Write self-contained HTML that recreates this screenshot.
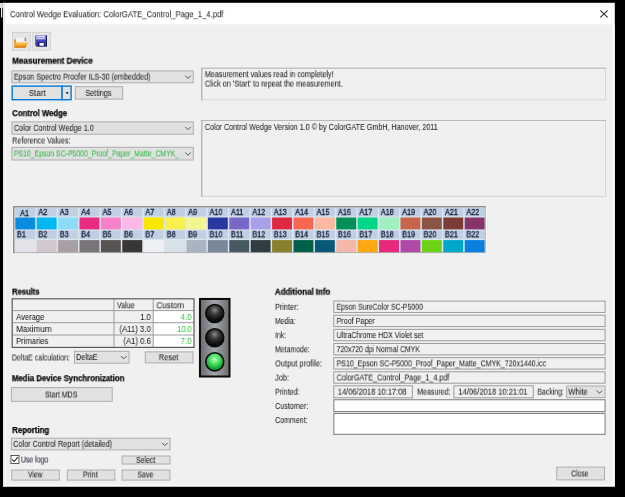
<!DOCTYPE html>
<html><head><meta charset="utf-8"><title>Control Wedge Evaluation</title>
<style>
html,body{margin:0;padding:0;}
body{width:625px;height:497px;background:#000;position:relative;overflow:hidden;font-family:"Liberation Sans",sans-serif;}
#w{filter:blur(0.45px);position:absolute;left:0;top:0;width:625px;height:497px}
#g{position:absolute;left:0;top:0;width:625px;height:497px;display:block}
.t{position:absolute;display:inline-block;white-space:pre;transform-origin:0 50%;will-change:transform;font-family:"Liberation Sans",sans-serif;}
</style></head><body><div id="w">
<svg id="g" width="625" height="497" viewBox="0 0 625 497">
<rect x="3.00" y="2.80" width="611.80" height="483.70" fill="#ffffff"/>
<rect x="3.00" y="24.50" width="611.80" height="462.00" fill="#f8f8f8"/>
<rect x="6.00" y="24.50" width="606.20" height="460.10" fill="#f0f0f0"/>
<rect x="3.00" y="2.80" width="1.90" height="483.70" fill="#ececec"/>
<rect x="0.00" y="3.00" width="2.90" height="5.00" fill="#e0e0e0"/>
<rect x="1.00" y="8.00" width="1.20" height="9.50" fill="#f4f4f4"/>
<svg x="599" y="9" width="10" height="10" viewBox="0 0 10 10"><path d="M1.3 1.4 L8.6 8.4 M8.6 1.4 L1.3 8.4" stroke="#2a2a2a" stroke-width="1.05" fill="none"/></svg>
<rect x="12.50" y="32.50" width="17.90" height="17.70" fill="#e5e5e5" stroke="#d2d2d2" stroke-width="1"/>
<rect x="32.80" y="32.50" width="17.60" height="17.70" fill="#e5e5e5" stroke="#d2d2d2" stroke-width="1"/>
<svg x="13.6" y="36.8" width="15.6" height="11.4" viewBox="0 0 15.6 11.4">
<defs><linearGradient id="fo" x1="0" x2="0" y1="0" y2="1"><stop offset="0" stop-color="#fcdc98"/><stop offset="0.45" stop-color="#f6b040"/><stop offset="1" stop-color="#d87c00"/></linearGradient></defs>
<path d="M0.6 2.4 L0.6 10.6 L11.6 10.6 L11.6 2.4 Z" fill="#e89a28"/>
<path d="M2.6 1.0 L11.4 1.0 L11.4 5.8 L2.6 5.8 Z" fill="#f2f6fa"/>
<path d="M11.0 1.0 L12.6 1.0 L12.6 4.4 L11.0 4.4 Z" fill="#8a9098"/>
<path d="M0.8 10.9 L2.3 5.6 Q2.4 5.2 2.9 5.2 L14.4 4.9 Q15 4.9 14.7 5.5 L12.5 10.2 Q12.2 10.9 11.5 10.9 Z" fill="url(#fo)"/>
</svg>
<svg x="34.9" y="34.9" width="12.4" height="11.9" viewBox="0 0 12.4 11.9">
<path d="M0.3 0.5 L12.1 0.5 L12.1 11.5 L1.6 11.5 L0.3 10.3 Z" fill="#4444c0"/>
<path d="M1.0 0.6 L10.9 0.6 L10.9 4.7 L1.0 4.7 Z" fill="#a4a4ea"/>
<path d="M2.4 1.4 L9.8 1.4 L9.8 2.1 L2.4 2.1 Z M2.4 3.0 L9.8 3.0 L9.8 3.7 L2.4 3.7 Z" fill="#e8e8fc"/>
<path d="M2.6 7.4 L9.9 7.4 L9.9 11.5 L2.6 11.5 Z" fill="#20206c"/>
<path d="M4.6 8.2 L8.9 8.2 L8.9 11.0 L4.6 11.0 Z" fill="#f4f4fa"/>
<path d="M10.9 0.5 L12.1 0.5 L12.1 11.5 L10.9 11.5 Z" fill="#1a1a5c"/>
<path d="M0.3 10.8 L12.1 10.8 L12.1 11.5 L1.6 11.5 Z" fill="#1a1a5c"/>
</svg>
<rect x="11.90" y="70.90" width="181.40" height="11.90" fill="#e1e1e1" stroke="#adadad" stroke-width="1"/>
<svg x="184.25" y="74.65" width="7.50" height="4.80" viewBox="-3.75 -2.4 7.5 4.8"><path d="M-2.75 -1.4 L0 1.4 L2.75 -1.4" fill="none" stroke="#444" stroke-width="0.9"/></svg>
<rect x="12.20" y="86.10" width="58.90" height="13.60" fill="#e1e1e1" stroke="#0078d7" stroke-width="1.4"/>
<rect x="61.20" y="85.40" width="1.60" height="15.00" fill="#0078d7"/>
<svg x="65.3" y="92.0" width="3.8" height="2.6" viewBox="0 0 5 3.4"><path d="M0.4 0.3 L4.6 0.3 L2.5 3 Z" fill="#111"/></svg>
<rect x="75.30" y="86.70" width="47.40" height="12.40" fill="#e1e1e1" stroke="#adadad" stroke-width="1"/>
<rect x="201.80" y="68.20" width="403.70" height="31.60" fill="#f0f0f0" stroke="#d2d6dc" stroke-width="1"/>
<rect x="201.30" y="67.70" width="404.70" height="1.00" fill="#b4b8c0"/>
<rect x="201.30" y="67.70" width="1.00" height="32.60" fill="#a4a8b0"/>
<rect x="11.90" y="121.90" width="181.40" height="12.30" fill="#e1e1e1" stroke="#adadad" stroke-width="1"/>
<svg x="184.25" y="125.85" width="7.50" height="4.80" viewBox="-3.75 -2.4 7.5 4.8"><path d="M-2.75 -1.4 L0 1.4 L2.75 -1.4" fill="none" stroke="#444" stroke-width="0.9"/></svg>
<rect x="11.90" y="147.30" width="181.40" height="12.70" fill="#e1e1e1" stroke="#adadad" stroke-width="1"/>
<svg x="184.25" y="151.45" width="7.50" height="4.80" viewBox="-3.75 -2.4 7.5 4.8"><path d="M-2.75 -1.4 L0 1.4 L2.75 -1.4" fill="none" stroke="#444" stroke-width="0.9"/></svg>
<rect x="201.80" y="120.50" width="403.70" height="75.90" fill="#f0f0f0" stroke="#d2d6dc" stroke-width="1"/>
<rect x="201.30" y="120.00" width="404.70" height="1.00" fill="#b4b8c0"/>
<rect x="201.30" y="120.00" width="1.00" height="76.90" fill="#a4a8b0"/>
<rect x="12.60" y="205.80" width="474.20" height="48.40" fill="#fafafa"/>
<rect x="13.50" y="206.60" width="471.70" height="46.10" fill="#dde4ee" stroke="#a6a6a6" stroke-width="1.0"/>
<rect x="13.00" y="206.10" width="472.70" height="1.30" fill="#8e8e8e"/>
<rect x="13.00" y="206.10" width="1.40" height="47.10" fill="#8e8e8e"/>
<rect x="15.30" y="207.80" width="19.90" height="8.60" fill="#bfd0e3"/>
<rect x="15.30" y="217.50" width="19.90" height="11.90" fill="#0a8ce0"/>
<rect x="15.30" y="230.40" width="19.90" height="8.40" fill="#bfd0e3"/>
<rect x="15.30" y="240.10" width="19.90" height="12.10" fill="#e5e1e9"/>
<rect x="36.70" y="207.80" width="19.90" height="8.60" fill="#bfd0e3"/>
<rect x="36.70" y="217.50" width="19.90" height="11.90" fill="#00b8f0"/>
<rect x="36.70" y="230.40" width="19.90" height="8.40" fill="#bfd0e3"/>
<rect x="36.70" y="240.10" width="19.90" height="12.10" fill="#d0c8cc"/>
<rect x="58.10" y="207.80" width="19.90" height="8.60" fill="#bfd0e3"/>
<rect x="58.10" y="217.50" width="19.90" height="11.90" fill="#8cdcf8"/>
<rect x="58.10" y="230.40" width="19.90" height="8.40" fill="#bfd0e3"/>
<rect x="58.10" y="240.10" width="19.90" height="12.10" fill="#a8a0a4"/>
<rect x="79.50" y="207.80" width="19.90" height="8.60" fill="#bfd0e3"/>
<rect x="79.50" y="217.50" width="19.90" height="11.90" fill="#ea2a80"/>
<rect x="79.50" y="230.40" width="19.90" height="8.40" fill="#bfd0e3"/>
<rect x="79.50" y="240.10" width="19.90" height="12.10" fill="#787478"/>
<rect x="100.90" y="207.80" width="19.90" height="8.60" fill="#bfd0e3"/>
<rect x="100.90" y="217.50" width="19.90" height="11.90" fill="#f880c8"/>
<rect x="100.90" y="230.40" width="19.90" height="8.40" fill="#bfd0e3"/>
<rect x="100.90" y="240.10" width="19.90" height="12.10" fill="#585454"/>
<rect x="122.30" y="207.80" width="19.90" height="8.60" fill="#bfd0e3"/>
<rect x="122.30" y="217.50" width="19.90" height="11.90" fill="#fcb8e8"/>
<rect x="122.30" y="230.40" width="19.90" height="8.40" fill="#bfd0e3"/>
<rect x="122.30" y="240.10" width="19.90" height="12.10" fill="#383634"/>
<rect x="143.70" y="207.80" width="19.90" height="8.60" fill="#bfd0e3"/>
<rect x="143.70" y="217.50" width="19.90" height="11.90" fill="#f8e800"/>
<rect x="143.70" y="230.40" width="19.90" height="8.40" fill="#bfd0e3"/>
<rect x="143.70" y="240.10" width="19.90" height="12.10" fill="#eef0f4"/>
<rect x="165.10" y="207.80" width="19.90" height="8.60" fill="#bfd0e3"/>
<rect x="165.10" y="217.50" width="19.90" height="11.90" fill="#f8f050"/>
<rect x="165.10" y="230.40" width="19.90" height="8.40" fill="#bfd0e3"/>
<rect x="165.10" y="240.10" width="19.90" height="12.10" fill="#d8e0e8"/>
<rect x="186.50" y="207.80" width="19.90" height="8.60" fill="#bfd0e3"/>
<rect x="186.50" y="217.50" width="19.90" height="11.90" fill="#f4f490"/>
<rect x="186.50" y="230.40" width="19.90" height="8.40" fill="#bfd0e3"/>
<rect x="186.50" y="240.10" width="19.90" height="12.10" fill="#a8b4c0"/>
<rect x="207.90" y="207.80" width="19.90" height="8.60" fill="#bfd0e3"/>
<rect x="207.90" y="217.50" width="19.90" height="11.90" fill="#2838a0"/>
<rect x="207.90" y="230.40" width="19.90" height="8.40" fill="#bfd0e3"/>
<rect x="207.90" y="240.10" width="19.90" height="12.10" fill="#788898"/>
<rect x="229.30" y="207.80" width="19.90" height="8.60" fill="#bfd0e3"/>
<rect x="229.30" y="217.50" width="19.90" height="11.90" fill="#7868c8"/>
<rect x="229.30" y="230.40" width="19.90" height="8.40" fill="#bfd0e3"/>
<rect x="229.30" y="240.10" width="19.90" height="12.10" fill="#485860"/>
<rect x="250.70" y="207.80" width="19.90" height="8.60" fill="#bfd0e3"/>
<rect x="250.70" y="217.50" width="19.90" height="11.90" fill="#a8a0e8"/>
<rect x="250.70" y="230.40" width="19.90" height="8.40" fill="#bfd0e3"/>
<rect x="250.70" y="240.10" width="19.90" height="12.10" fill="#303c40"/>
<rect x="272.10" y="207.80" width="19.90" height="8.60" fill="#bfd0e3"/>
<rect x="272.10" y="217.50" width="19.90" height="11.90" fill="#e02840"/>
<rect x="272.10" y="230.40" width="19.90" height="8.40" fill="#bfd0e3"/>
<rect x="272.10" y="240.10" width="19.90" height="12.10" fill="#88802c"/>
<rect x="293.50" y="207.80" width="19.90" height="8.60" fill="#bfd0e3"/>
<rect x="293.50" y="217.50" width="19.90" height="11.90" fill="#f86850"/>
<rect x="293.50" y="230.40" width="19.90" height="8.40" fill="#bfd0e3"/>
<rect x="293.50" y="240.10" width="19.90" height="12.10" fill="#006048"/>
<rect x="314.90" y="207.80" width="19.90" height="8.60" fill="#bfd0e3"/>
<rect x="314.90" y="217.50" width="19.90" height="11.90" fill="#fcb8a0"/>
<rect x="314.90" y="230.40" width="19.90" height="8.40" fill="#bfd0e3"/>
<rect x="314.90" y="240.10" width="19.90" height="12.10" fill="#085878"/>
<rect x="336.30" y="207.80" width="19.90" height="8.60" fill="#bfd0e3"/>
<rect x="336.30" y="217.50" width="19.90" height="11.90" fill="#009058"/>
<rect x="336.30" y="230.40" width="19.90" height="8.40" fill="#bfd0e3"/>
<rect x="336.30" y="240.10" width="19.90" height="12.10" fill="#f4b8a8"/>
<rect x="357.70" y="207.80" width="19.90" height="8.60" fill="#bfd0e3"/>
<rect x="357.70" y="217.50" width="19.90" height="11.90" fill="#00d888"/>
<rect x="357.70" y="230.40" width="19.90" height="8.40" fill="#bfd0e3"/>
<rect x="357.70" y="240.10" width="19.90" height="12.10" fill="#ffa810"/>
<rect x="379.10" y="207.80" width="19.90" height="8.60" fill="#bfd0e3"/>
<rect x="379.10" y="217.50" width="19.90" height="11.90" fill="#a0f0c0"/>
<rect x="379.10" y="230.40" width="19.90" height="8.40" fill="#bfd0e3"/>
<rect x="379.10" y="240.10" width="19.90" height="12.10" fill="#e82878"/>
<rect x="400.50" y="207.80" width="19.90" height="8.60" fill="#bfd0e3"/>
<rect x="400.50" y="217.50" width="19.90" height="11.90" fill="#c8644c"/>
<rect x="400.50" y="230.40" width="19.90" height="8.40" fill="#bfd0e3"/>
<rect x="400.50" y="240.10" width="19.90" height="12.10" fill="#b048a8"/>
<rect x="421.90" y="207.80" width="19.90" height="8.60" fill="#bfd0e3"/>
<rect x="421.90" y="217.50" width="19.90" height="11.90" fill="#8a5444"/>
<rect x="421.90" y="230.40" width="19.90" height="8.40" fill="#bfd0e3"/>
<rect x="421.90" y="240.10" width="19.90" height="12.10" fill="#6cd414"/>
<rect x="443.30" y="207.80" width="19.90" height="8.60" fill="#bfd0e3"/>
<rect x="443.30" y="217.50" width="19.90" height="11.90" fill="#7a3c34"/>
<rect x="443.30" y="230.40" width="19.90" height="8.40" fill="#bfd0e3"/>
<rect x="443.30" y="240.10" width="19.90" height="12.10" fill="#00a8c8"/>
<rect x="464.70" y="207.80" width="19.90" height="8.60" fill="#bfd0e3"/>
<rect x="464.70" y="217.50" width="19.90" height="11.90" fill="#86346a"/>
<rect x="464.70" y="230.40" width="19.90" height="8.40" fill="#bfd0e3"/>
<rect x="464.70" y="240.10" width="19.90" height="12.10" fill="#0880e0"/>
<rect x="12.20" y="298.80" width="181.80" height="48.60" fill="#f0f0f0"/>
<rect x="153.20" y="310.60" width="40.80" height="36.80" fill="#ffffff"/>
<rect x="12.20" y="310.10" width="181.80" height="1.00" fill="#9c9c9c"/>
<rect x="12.20" y="322.20" width="181.80" height="1.00" fill="#9c9c9c"/>
<rect x="12.20" y="334.50" width="181.80" height="1.00" fill="#9c9c9c"/>
<rect x="113.50" y="298.80" width="1.00" height="48.60" fill="#9c9c9c"/>
<rect x="152.70" y="298.80" width="1.00" height="48.60" fill="#9c9c9c"/>
<rect x="12.20" y="298.80" width="181.80" height="48.60" fill="none" stroke="#5a5a5a" stroke-width="1.2"/>
<rect x="74.50" y="351.30" width="54.50" height="11.90" fill="#e1e1e1" stroke="#adadad" stroke-width="1"/>
<svg x="119.95" y="355.05" width="7.50" height="4.80" viewBox="-3.75 -2.4 7.5 4.8"><path d="M-2.75 -1.4 L0 1.4 L2.75 -1.4" fill="none" stroke="#444" stroke-width="0.9"/></svg>
<rect x="145.30" y="351.90" width="47.70" height="11.00" fill="#e1e1e1" stroke="#adadad" stroke-width="1"/>
<svg x="198.8" y="297.8" width="31.9" height="79.9" viewBox="0 0 32.4 80.4" preserveAspectRatio="none">
<defs>
<linearGradient id="hg" x1="0" x2="1" y1="0" y2="0"><stop offset="0" stop-color="#6c7074"/><stop offset="0.5" stop-color="#a4a8ac"/><stop offset="1" stop-color="#6c7074"/></linearGradient>
<radialGradient id="dk" cx="0.5" cy="0.3" r="0.6"><stop offset="0" stop-color="#8a8a8a"/><stop offset="0.45" stop-color="#3a3a3a"/><stop offset="1" stop-color="#0c0c0c"/></radialGradient>
<radialGradient id="gr" cx="0.5" cy="0.35" r="0.6"><stop offset="0" stop-color="#b8ffc0"/><stop offset="0.5" stop-color="#48e060"/><stop offset="1" stop-color="#109828"/></radialGradient>
</defs>
<rect x="0" y="0" width="32.4" height="80.4" fill="#0a0a0a"/>
<rect x="2.2" y="2.2" width="28" height="76" fill="url(#hg)"/>
<circle cx="16.2" cy="15.8" r="9.9" fill="#0a0a0a"/><circle cx="16.2" cy="15.8" r="8.3" fill="url(#dk)"/>
<circle cx="16.2" cy="40.2" r="9.9" fill="#0a0a0a"/><circle cx="16.2" cy="40.2" r="8.3" fill="url(#dk)"/>
<circle cx="16.2" cy="64.4" r="9.9" fill="#0a0a0a"/><circle cx="16.2" cy="64.4" r="8.3" fill="url(#gr)"/>
</svg>
<rect x="11.40" y="387.60" width="100.80" height="13.70" fill="#e1e1e1" stroke="#adadad" stroke-width="1"/>
<rect x="11.40" y="438.20" width="158.70" height="11.70" fill="#e1e1e1" stroke="#adadad" stroke-width="1"/>
<svg x="161.05" y="441.85" width="7.50" height="4.80" viewBox="-3.75 -2.4 7.5 4.8"><path d="M-2.75 -1.4 L0 1.4 L2.75 -1.4" fill="none" stroke="#444" stroke-width="0.9"/></svg>
<rect x="10.95" y="455.45" width="8.00" height="8.00" fill="#ffffff" stroke="#4a4a4a" stroke-width="0.9"/>
<svg x="10.5" y="455.0" width="8.9" height="8.9" viewBox="0 0 8 8"><path d="M1.5 4.0 L3.2 5.9 L6.6 1.9" fill="none" stroke="#222" stroke-width="0.9"/></svg>
<rect x="122.10" y="456.00" width="47.90" height="8.00" fill="#e1e1e1" stroke="#adadad" stroke-width="1"/>
<rect x="11.80" y="470.00" width="47.50" height="10.10" fill="#e1e1e1" stroke="#adadad" stroke-width="1"/>
<rect x="67.30" y="470.00" width="47.50" height="10.10" fill="#e1e1e1" stroke="#adadad" stroke-width="1"/>
<rect x="122.10" y="470.00" width="47.90" height="10.10" fill="#e1e1e1" stroke="#adadad" stroke-width="1"/>
<rect x="556.80" y="467.10" width="47.70" height="12.80" fill="#e1e1e1" stroke="#adadad" stroke-width="1"/>
<rect x="333.80" y="301.05" width="271.30" height="11.40" fill="#f0f0f0" stroke="#9c9c9c" stroke-width="1"/>
<rect x="333.80" y="315.20" width="271.30" height="11.40" fill="#f0f0f0" stroke="#9c9c9c" stroke-width="1"/>
<rect x="333.80" y="329.35" width="271.30" height="11.40" fill="#f0f0f0" stroke="#9c9c9c" stroke-width="1"/>
<rect x="333.80" y="343.50" width="271.30" height="11.40" fill="#f0f0f0" stroke="#9c9c9c" stroke-width="1"/>
<rect x="333.80" y="357.65" width="271.30" height="11.40" fill="#f0f0f0" stroke="#9c9c9c" stroke-width="1"/>
<rect x="333.80" y="371.80" width="271.30" height="11.40" fill="#f0f0f0" stroke="#9c9c9c" stroke-width="1"/>
<rect x="333.80" y="385.80" width="78.60" height="12.00" fill="#f0f0f0" stroke="#9c9c9c" stroke-width="1"/>
<rect x="453.90" y="385.80" width="79.40" height="12.00" fill="#f0f0f0" stroke="#9c9c9c" stroke-width="1"/>
<rect x="566.70" y="386.00" width="38.40" height="11.60" fill="#e1e1e1" stroke="#adadad" stroke-width="1"/>
<svg x="595.65" y="389.55" width="7.50" height="4.80" viewBox="-3.75 -2.4 7.5 4.8"><path d="M-2.75 -1.4 L0 1.4 L2.75 -1.4" fill="none" stroke="#444" stroke-width="0.9"/></svg>
<rect x="333.85" y="399.75" width="271.20" height="11.80" fill="#ffffff" stroke="#868686" stroke-width="1.1"/>
<rect x="333.85" y="413.45" width="271.20" height="20.90" fill="#ffffff" stroke="#868686" stroke-width="1.1"/>
</svg>
<span class="t" style="left:9px;top:7px;font-size:9.4px;line-height:14px;color:#222;-webkit-text-stroke:0.04px #222;transform:translate(0.90px,0.19px) scaleX(0.8206);">Control Wedge Evaluation: ColorGATE_Control_Page_1_4.pdf</span>
<span class="t" style="left:12px;top:55px;font-size:8.2px;line-height:12px;color:#000000;font-weight:bold;-webkit-text-stroke:0.25px #000000;transform:translate(0.20px,0.67px) scaleX(0.9880);">Measurement Device</span>
<span class="t" style="left:13px;top:70px;font-size:8.8px;line-height:13px;color:#1a1a1a;-webkit-text-stroke:0.04px #1a1a1a;transform:translate(0.80px,0.63px) scaleX(0.8166);">Epson Spectro Proofer ILS-30 (embedded)</span>
<span class="t" style="left:28px;top:86px;font-size:8.8px;line-height:13px;color:#1a1a1a;-webkit-text-stroke:0.04px #1a1a1a;transform:translate(0.80px,0.88px) scaleX(0.9040);">Start</span>
<span class="t" style="left:85px;top:86px;font-size:8.8px;line-height:13px;color:#1a1a1a;-webkit-text-stroke:0.04px #1a1a1a;transform:translate(0.50px,0.88px) scaleX(0.8114);">Settings</span>
<span class="t" style="left:204px;top:68px;font-size:8.8px;line-height:13px;color:#1a1a1a;-webkit-text-stroke:0.04px #1a1a1a;transform:translate(0.80px,0.18px) scaleX(0.8153);">Measurement values read in completely!</span>
<span class="t" style="left:204px;top:77px;font-size:8.8px;line-height:13px;color:#1a1a1a;-webkit-text-stroke:0.04px #1a1a1a;transform:translate(0.80px,0.58px) scaleX(0.8300);">Click on 'Start' to repeat the measurement.</span>
<span class="t" style="left:12px;top:108px;font-size:8.2px;line-height:12px;color:#000000;font-weight:bold;-webkit-text-stroke:0.25px #000000;transform:translate(0.20px,0.07px) scaleX(0.9458);">Control Wedge</span>
<span class="t" style="left:13px;top:121px;font-size:8.8px;line-height:13px;color:#1a1a1a;-webkit-text-stroke:0.04px #1a1a1a;transform:translate(0.80px,0.83px) scaleX(0.8275);">Color Control Wedge 1.0</span>
<span class="t" style="left:12px;top:134px;font-size:8.8px;line-height:13px;color:#1a1a1a;-webkit-text-stroke:0.04px #1a1a1a;transform:translate(0.20px,0.48px) scaleX(0.8113);">Reference Values:</span>
<span class="t" style="left:13px;top:147px;font-size:8.8px;line-height:13px;color:#2db83d;-webkit-text-stroke:0.04px #2db83d;transform:translate(0.80px,0.43px) scaleX(0.7845);">PS10_Epson SC-P5000_Proof_Paper_Matte_CMYK_</span>
<span class="t" style="left:204px;top:120px;font-size:8.8px;line-height:13px;color:#1a1a1a;-webkit-text-stroke:0.04px #1a1a1a;transform:translate(0.80px,0.88px) scaleX(0.8168);">Color Control Wedge Version 1.0 © by ColorGATE GmbH, Hanover, 2011</span>
<span class="t" style="left:20px;top:207px;font-size:8.6px;line-height:13px;color:#0c1630;-webkit-text-stroke:0.04px #0c1630;transform:translate(0.10px,0.11px) scaleX(0.8400);-webkit-text-stroke:0.3px #0c1630;">A1</span>
<span class="t" style="left:17px;top:228px;font-size:8.6px;line-height:13px;color:#0c1630;-webkit-text-stroke:0.04px #0c1630;transform:translate(0.00px,0.21px) scaleX(0.8400);-webkit-text-stroke:0.3px #0c1630;">B1</span>
<span class="t" style="left:38px;top:205px;font-size:8.6px;line-height:13px;color:#0c1630;-webkit-text-stroke:0.04px #0c1630;transform:translate(0.40px,0.91px) scaleX(0.8400);-webkit-text-stroke:0.3px #0c1630;">A2</span>
<span class="t" style="left:38px;top:228px;font-size:8.6px;line-height:13px;color:#0c1630;-webkit-text-stroke:0.04px #0c1630;transform:translate(0.40px,0.21px) scaleX(0.8400);-webkit-text-stroke:0.3px #0c1630;">B2</span>
<span class="t" style="left:59px;top:205px;font-size:8.6px;line-height:13px;color:#0c1630;-webkit-text-stroke:0.04px #0c1630;transform:translate(0.80px,0.91px) scaleX(0.8400);-webkit-text-stroke:0.3px #0c1630;">A3</span>
<span class="t" style="left:59px;top:228px;font-size:8.6px;line-height:13px;color:#0c1630;-webkit-text-stroke:0.04px #0c1630;transform:translate(0.80px,0.21px) scaleX(0.8400);-webkit-text-stroke:0.3px #0c1630;">B3</span>
<span class="t" style="left:81px;top:205px;font-size:8.6px;line-height:13px;color:#0c1630;-webkit-text-stroke:0.04px #0c1630;transform:translate(0.20px,0.91px) scaleX(0.8400);-webkit-text-stroke:0.3px #0c1630;">A4</span>
<span class="t" style="left:81px;top:228px;font-size:8.6px;line-height:13px;color:#0c1630;-webkit-text-stroke:0.04px #0c1630;transform:translate(0.20px,0.21px) scaleX(0.8400);-webkit-text-stroke:0.3px #0c1630;">B4</span>
<span class="t" style="left:102px;top:205px;font-size:8.6px;line-height:13px;color:#0c1630;-webkit-text-stroke:0.04px #0c1630;transform:translate(0.60px,0.91px) scaleX(0.8400);-webkit-text-stroke:0.3px #0c1630;">A5</span>
<span class="t" style="left:102px;top:228px;font-size:8.6px;line-height:13px;color:#0c1630;-webkit-text-stroke:0.04px #0c1630;transform:translate(0.60px,0.21px) scaleX(0.8400);-webkit-text-stroke:0.3px #0c1630;">B5</span>
<span class="t" style="left:124px;top:205px;font-size:8.6px;line-height:13px;color:#0c1630;-webkit-text-stroke:0.04px #0c1630;transform:translate(0.00px,0.91px) scaleX(0.8400);-webkit-text-stroke:0.3px #0c1630;">A6</span>
<span class="t" style="left:124px;top:228px;font-size:8.6px;line-height:13px;color:#0c1630;-webkit-text-stroke:0.04px #0c1630;transform:translate(0.00px,0.21px) scaleX(0.8400);-webkit-text-stroke:0.3px #0c1630;">B6</span>
<span class="t" style="left:145px;top:205px;font-size:8.6px;line-height:13px;color:#0c1630;-webkit-text-stroke:0.04px #0c1630;transform:translate(0.40px,0.91px) scaleX(0.8400);-webkit-text-stroke:0.3px #0c1630;">A7</span>
<span class="t" style="left:145px;top:228px;font-size:8.6px;line-height:13px;color:#0c1630;-webkit-text-stroke:0.04px #0c1630;transform:translate(0.40px,0.21px) scaleX(0.8400);-webkit-text-stroke:0.3px #0c1630;">B7</span>
<span class="t" style="left:166px;top:205px;font-size:8.6px;line-height:13px;color:#0c1630;-webkit-text-stroke:0.04px #0c1630;transform:translate(0.80px,0.91px) scaleX(0.8400);-webkit-text-stroke:0.3px #0c1630;">A8</span>
<span class="t" style="left:166px;top:228px;font-size:8.6px;line-height:13px;color:#0c1630;-webkit-text-stroke:0.04px #0c1630;transform:translate(0.80px,0.21px) scaleX(0.8400);-webkit-text-stroke:0.3px #0c1630;">B8</span>
<span class="t" style="left:188px;top:205px;font-size:8.6px;line-height:13px;color:#0c1630;-webkit-text-stroke:0.04px #0c1630;transform:translate(0.20px,0.91px) scaleX(0.8400);-webkit-text-stroke:0.3px #0c1630;">A9</span>
<span class="t" style="left:188px;top:228px;font-size:8.6px;line-height:13px;color:#0c1630;-webkit-text-stroke:0.04px #0c1630;transform:translate(0.20px,0.21px) scaleX(0.8400);-webkit-text-stroke:0.3px #0c1630;">B9</span>
<span class="t" style="left:209px;top:205px;font-size:8.6px;line-height:13px;color:#0c1630;-webkit-text-stroke:0.04px #0c1630;transform:translate(0.60px,0.91px) scaleX(0.8400);-webkit-text-stroke:0.3px #0c1630;">A10</span>
<span class="t" style="left:209px;top:228px;font-size:8.6px;line-height:13px;color:#0c1630;-webkit-text-stroke:0.04px #0c1630;transform:translate(0.60px,0.21px) scaleX(0.8400);-webkit-text-stroke:0.3px #0c1630;">B10</span>
<span class="t" style="left:231px;top:205px;font-size:8.6px;line-height:13px;color:#0c1630;-webkit-text-stroke:0.04px #0c1630;transform:translate(0.00px,0.91px) scaleX(0.8400);-webkit-text-stroke:0.3px #0c1630;">A11</span>
<span class="t" style="left:231px;top:228px;font-size:8.6px;line-height:13px;color:#0c1630;-webkit-text-stroke:0.04px #0c1630;transform:translate(0.00px,0.21px) scaleX(0.8400);-webkit-text-stroke:0.3px #0c1630;">B11</span>
<span class="t" style="left:252px;top:205px;font-size:8.6px;line-height:13px;color:#0c1630;-webkit-text-stroke:0.04px #0c1630;transform:translate(0.40px,0.91px) scaleX(0.8400);-webkit-text-stroke:0.3px #0c1630;">A12</span>
<span class="t" style="left:252px;top:228px;font-size:8.6px;line-height:13px;color:#0c1630;-webkit-text-stroke:0.04px #0c1630;transform:translate(0.40px,0.21px) scaleX(0.8400);-webkit-text-stroke:0.3px #0c1630;">B12</span>
<span class="t" style="left:273px;top:205px;font-size:8.6px;line-height:13px;color:#0c1630;-webkit-text-stroke:0.04px #0c1630;transform:translate(0.80px,0.91px) scaleX(0.8400);-webkit-text-stroke:0.3px #0c1630;">A13</span>
<span class="t" style="left:273px;top:228px;font-size:8.6px;line-height:13px;color:#0c1630;-webkit-text-stroke:0.04px #0c1630;transform:translate(0.80px,0.21px) scaleX(0.8400);-webkit-text-stroke:0.3px #0c1630;">B13</span>
<span class="t" style="left:295px;top:205px;font-size:8.6px;line-height:13px;color:#0c1630;-webkit-text-stroke:0.04px #0c1630;transform:translate(0.20px,0.91px) scaleX(0.8400);-webkit-text-stroke:0.3px #0c1630;">A14</span>
<span class="t" style="left:295px;top:228px;font-size:8.6px;line-height:13px;color:#0c1630;-webkit-text-stroke:0.04px #0c1630;transform:translate(0.20px,0.21px) scaleX(0.8400);-webkit-text-stroke:0.3px #0c1630;">B14</span>
<span class="t" style="left:316px;top:205px;font-size:8.6px;line-height:13px;color:#0c1630;-webkit-text-stroke:0.04px #0c1630;transform:translate(0.60px,0.91px) scaleX(0.8400);-webkit-text-stroke:0.3px #0c1630;">A15</span>
<span class="t" style="left:316px;top:228px;font-size:8.6px;line-height:13px;color:#0c1630;-webkit-text-stroke:0.04px #0c1630;transform:translate(0.60px,0.21px) scaleX(0.8400);-webkit-text-stroke:0.3px #0c1630;">B15</span>
<span class="t" style="left:338px;top:205px;font-size:8.6px;line-height:13px;color:#0c1630;-webkit-text-stroke:0.04px #0c1630;transform:translate(0.00px,0.91px) scaleX(0.8400);-webkit-text-stroke:0.3px #0c1630;">A16</span>
<span class="t" style="left:338px;top:228px;font-size:8.6px;line-height:13px;color:#0c1630;-webkit-text-stroke:0.04px #0c1630;transform:translate(0.00px,0.21px) scaleX(0.8400);-webkit-text-stroke:0.3px #0c1630;">B16</span>
<span class="t" style="left:359px;top:205px;font-size:8.6px;line-height:13px;color:#0c1630;-webkit-text-stroke:0.04px #0c1630;transform:translate(0.40px,0.91px) scaleX(0.8400);-webkit-text-stroke:0.3px #0c1630;">A17</span>
<span class="t" style="left:359px;top:228px;font-size:8.6px;line-height:13px;color:#0c1630;-webkit-text-stroke:0.04px #0c1630;transform:translate(0.40px,0.21px) scaleX(0.8400);-webkit-text-stroke:0.3px #0c1630;">B17</span>
<span class="t" style="left:380px;top:205px;font-size:8.6px;line-height:13px;color:#0c1630;-webkit-text-stroke:0.04px #0c1630;transform:translate(0.80px,0.91px) scaleX(0.8400);-webkit-text-stroke:0.3px #0c1630;">A18</span>
<span class="t" style="left:380px;top:228px;font-size:8.6px;line-height:13px;color:#0c1630;-webkit-text-stroke:0.04px #0c1630;transform:translate(0.80px,0.21px) scaleX(0.8400);-webkit-text-stroke:0.3px #0c1630;">B18</span>
<span class="t" style="left:402px;top:205px;font-size:8.6px;line-height:13px;color:#0c1630;-webkit-text-stroke:0.04px #0c1630;transform:translate(0.20px,0.91px) scaleX(0.8400);-webkit-text-stroke:0.3px #0c1630;">A19</span>
<span class="t" style="left:402px;top:228px;font-size:8.6px;line-height:13px;color:#0c1630;-webkit-text-stroke:0.04px #0c1630;transform:translate(0.20px,0.21px) scaleX(0.8400);-webkit-text-stroke:0.3px #0c1630;">B19</span>
<span class="t" style="left:423px;top:205px;font-size:8.6px;line-height:13px;color:#0c1630;-webkit-text-stroke:0.04px #0c1630;transform:translate(0.60px,0.91px) scaleX(0.8400);-webkit-text-stroke:0.3px #0c1630;">A20</span>
<span class="t" style="left:423px;top:228px;font-size:8.6px;line-height:13px;color:#0c1630;-webkit-text-stroke:0.04px #0c1630;transform:translate(0.60px,0.21px) scaleX(0.8400);-webkit-text-stroke:0.3px #0c1630;">B20</span>
<span class="t" style="left:445px;top:205px;font-size:8.6px;line-height:13px;color:#0c1630;-webkit-text-stroke:0.04px #0c1630;transform:translate(0.00px,0.91px) scaleX(0.8400);-webkit-text-stroke:0.3px #0c1630;">A21</span>
<span class="t" style="left:445px;top:228px;font-size:8.6px;line-height:13px;color:#0c1630;-webkit-text-stroke:0.04px #0c1630;transform:translate(0.00px,0.21px) scaleX(0.8400);-webkit-text-stroke:0.3px #0c1630;">B21</span>
<span class="t" style="left:466px;top:205px;font-size:8.6px;line-height:13px;color:#0c1630;-webkit-text-stroke:0.04px #0c1630;transform:translate(0.40px,0.91px) scaleX(0.8400);-webkit-text-stroke:0.3px #0c1630;">A22</span>
<span class="t" style="left:466px;top:228px;font-size:8.6px;line-height:13px;color:#0c1630;-webkit-text-stroke:0.04px #0c1630;transform:translate(0.40px,0.21px) scaleX(0.8400);-webkit-text-stroke:0.3px #0c1630;">B22</span>
<span class="t" style="left:12px;top:286px;font-size:8.2px;line-height:12px;color:#000000;font-weight:bold;-webkit-text-stroke:0.25px #000000;transform:translate(0.10px,0.57px) scaleX(0.9251);">Results</span>
<span class="t" style="left:116px;top:299px;font-size:8.8px;line-height:13px;color:#1a1a1a;-webkit-text-stroke:0.04px #1a1a1a;transform:translate(0.90px,0.28px) scaleX(0.8100);">Value</span>
<span class="t" style="left:156px;top:299px;font-size:8.8px;line-height:13px;color:#1a1a1a;-webkit-text-stroke:0.04px #1a1a1a;transform:translate(0.40px,0.28px) scaleX(0.9104);">Custom</span>
<span class="t" style="left:16px;top:310px;font-size:8.8px;line-height:13px;color:#1a1a1a;-webkit-text-stroke:0.04px #1a1a1a;transform:translate(0.20px,0.98px) scaleX(0.8616);">Average</span>
<span class="t" style="left:140px;top:310px;font-size:8.8px;line-height:13px;color:#1a1a1a;-webkit-text-stroke:0.04px #1a1a1a;transform:translate(0.30px,0.98px) scaleX(0.8584);">1.0</span>
<span class="t" style="left:180px;top:310px;font-size:8.8px;line-height:13px;color:#35c045;-webkit-text-stroke:0.04px #35c045;transform:translate(0.60px,0.98px) scaleX(0.8993);">4.0</span>
<span class="t" style="left:16px;top:322px;font-size:8.8px;line-height:13px;color:#1a1a1a;-webkit-text-stroke:0.04px #1a1a1a;transform:translate(0.20px,0.98px) scaleX(0.9283);">Maximum</span>
<span class="t" style="left:119px;top:322px;font-size:8.8px;line-height:13px;color:#1a1a1a;-webkit-text-stroke:0.04px #1a1a1a;transform:translate(0.40px,0.98px) scaleX(0.8835);">(A11) 3.0</span>
<span class="t" style="left:177px;top:322px;font-size:8.8px;line-height:13px;color:#35c045;-webkit-text-stroke:0.04px #35c045;transform:translate(0.30px,0.98px) scaleX(0.8350);">10.0</span>
<span class="t" style="left:16px;top:334px;font-size:8.8px;line-height:13px;color:#1a1a1a;-webkit-text-stroke:0.04px #1a1a1a;transform:translate(0.20px,0.88px) scaleX(0.8639);">Primaries</span>
<span class="t" style="left:123px;top:334px;font-size:8.8px;line-height:13px;color:#1a1a1a;-webkit-text-stroke:0.04px #1a1a1a;transform:translate(0.40px,0.88px) scaleX(0.8754);">(A1) 0.6</span>
<span class="t" style="left:180px;top:334px;font-size:8.8px;line-height:13px;color:#35c045;-webkit-text-stroke:0.04px #35c045;transform:translate(0.60px,0.88px) scaleX(0.8993);">7.0</span>
<span class="t" style="left:11px;top:351px;font-size:8.8px;line-height:13px;color:#1a1a1a;-webkit-text-stroke:0.04px #1a1a1a;transform:translate(0.70px,0.48px) scaleX(0.7986);">DeltaE calculation:</span>
<span class="t" style="left:76px;top:351px;font-size:8.8px;line-height:13px;color:#1a1a1a;-webkit-text-stroke:0.04px #1a1a1a;transform:translate(0.10px,0.03px) scaleX(0.8140);">DeltaE</span>
<span class="t" style="left:158px;top:351px;font-size:8.8px;line-height:13px;color:#1a1a1a;-webkit-text-stroke:0.04px #1a1a1a;transform:translate(0.80px,0.28px) scaleX(0.8526);">Reset</span>
<span class="t" style="left:11px;top:373px;font-size:8.2px;line-height:12px;color:#000000;font-weight:bold;-webkit-text-stroke:0.25px #000000;transform:translate(0.90px,0.17px) scaleX(0.9550);">Media Device Synchronization</span>
<span class="t" style="left:44px;top:388px;font-size:8.8px;line-height:13px;color:#1a1a1a;-webkit-text-stroke:0.04px #1a1a1a;transform:translate(0.90px,0.48px) scaleX(0.8008);">Start MDS</span>
<span class="t" style="left:12px;top:424px;font-size:8.2px;line-height:12px;color:#000000;font-weight:bold;-webkit-text-stroke:0.25px #000000;transform:translate(0.20px,0.97px) scaleX(0.9531);">Reporting</span>
<span class="t" style="left:13px;top:437px;font-size:8.8px;line-height:13px;color:#1a1a1a;-webkit-text-stroke:0.04px #1a1a1a;transform:translate(0.10px,0.83px) scaleX(0.8262);">Color Control Report (detailed)</span>
<span class="t" style="left:20px;top:453px;font-size:8.8px;line-height:13px;color:#121234;-webkit-text-stroke:0.04px #121234;transform:translate(0.80px,0.48px) scaleX(0.7889);">Use logo</span>
<span class="t" style="left:136px;top:453px;font-size:8.8px;line-height:13px;color:#1a1a1a;-webkit-text-stroke:0.04px #1a1a1a;transform:translate(0.00px,0.88px) scaleX(0.7891);">Select</span>
<span class="t" style="left:28px;top:468px;font-size:8.8px;line-height:13px;color:#1a1a1a;-webkit-text-stroke:0.04px #1a1a1a;transform:translate(0.00px,0.48px) scaleX(0.7613);">View</span>
<span class="t" style="left:82px;top:468px;font-size:8.8px;line-height:13px;color:#1a1a1a;-webkit-text-stroke:0.04px #1a1a1a;transform:translate(0.80px,0.48px) scaleX(0.8235);">Print</span>
<span class="t" style="left:137px;top:468px;font-size:8.8px;line-height:13px;color:#1a1a1a;-webkit-text-stroke:0.04px #1a1a1a;transform:translate(0.50px,0.48px) scaleX(0.7877);">Save</span>
<span class="t" style="left:571px;top:467px;font-size:8.8px;line-height:13px;color:#1a1a1a;-webkit-text-stroke:0.04px #1a1a1a;transform:translate(0.20px,0.48px) scaleX(0.7690);">Close</span>
<span class="t" style="left:274px;top:286px;font-size:8.2px;line-height:12px;color:#000000;font-weight:bold;-webkit-text-stroke:0.25px #000000;transform:translate(0.80px,0.67px) scaleX(0.9707);">Additional Info</span>
<span class="t" style="left:275px;top:300px;font-size:8.8px;line-height:13px;color:#1a1a1a;-webkit-text-stroke:0.04px #1a1a1a;transform:translate(0.00px,0.83px) scaleX(0.8286);">Printer:</span>
<span class="t" style="left:336px;top:300px;font-size:8.8px;line-height:13px;color:#1a1a1a;-webkit-text-stroke:0.04px #1a1a1a;transform:translate(0.60px,0.73px) scaleX(0.7832);">Epson SureColor SC-P5000</span>
<span class="t" style="left:275px;top:314px;font-size:8.8px;line-height:13px;color:#1a1a1a;-webkit-text-stroke:0.04px #1a1a1a;transform:translate(0.00px,0.98px) scaleX(0.7762);">Media:</span>
<span class="t" style="left:336px;top:314px;font-size:8.8px;line-height:13px;color:#1a1a1a;-webkit-text-stroke:0.04px #1a1a1a;transform:translate(0.60px,0.88px) scaleX(0.8156);">Proof Paper</span>
<span class="t" style="left:275px;top:329px;font-size:8.8px;line-height:13px;color:#1a1a1a;-webkit-text-stroke:0.04px #1a1a1a;transform:translate(0.00px,0.13px) scaleX(0.7756);">Ink:</span>
<span class="t" style="left:336px;top:329px;font-size:8.8px;line-height:13px;color:#1a1a1a;-webkit-text-stroke:0.04px #1a1a1a;transform:translate(0.60px,0.03px) scaleX(0.7936);">UltraChrome HDX Violet set</span>
<span class="t" style="left:275px;top:343px;font-size:8.8px;line-height:13px;color:#1a1a1a;-webkit-text-stroke:0.04px #1a1a1a;transform:translate(0.00px,0.28px) scaleX(0.7883);">Metamode:</span>
<span class="t" style="left:336px;top:343px;font-size:8.8px;line-height:13px;color:#1a1a1a;-webkit-text-stroke:0.04px #1a1a1a;transform:translate(0.60px,0.18px) scaleX(0.7813);">720x720 dpi Normal CMYK</span>
<span class="t" style="left:275px;top:357px;font-size:8.8px;line-height:13px;color:#1a1a1a;-webkit-text-stroke:0.04px #1a1a1a;transform:translate(0.00px,0.43px) scaleX(0.8504);">Output profile:</span>
<span class="t" style="left:336px;top:357px;font-size:8.8px;line-height:13px;color:#1a1a1a;-webkit-text-stroke:0.04px #1a1a1a;transform:translate(0.60px,0.33px) scaleX(0.7979);">PS10_Epson SC-P5000_Proof_Paper_Matte_CMYK_720x1440.icc</span>
<span class="t" style="left:275px;top:371px;font-size:8.8px;line-height:13px;color:#1a1a1a;-webkit-text-stroke:0.04px #1a1a1a;transform:translate(0.00px,0.58px) scaleX(0.8418);">Job:</span>
<span class="t" style="left:336px;top:371px;font-size:8.8px;line-height:13px;color:#1a1a1a;-webkit-text-stroke:0.04px #1a1a1a;transform:translate(0.60px,0.48px) scaleX(0.8216);">ColorGATE_Control_Page_1_4.pdf</span>
<span class="t" style="left:275px;top:385px;font-size:8.8px;line-height:13px;color:#1a1a1a;-webkit-text-stroke:0.04px #1a1a1a;transform:translate(0.00px,0.73px) scaleX(0.8112);">Printed:</span>
<span class="t" style="left:275px;top:399px;font-size:8.8px;line-height:13px;color:#1a1a1a;-webkit-text-stroke:0.04px #1a1a1a;transform:translate(0.00px,0.88px) scaleX(0.8180);">Customer:</span>
<span class="t" style="left:275px;top:414px;font-size:8.8px;line-height:13px;color:#1a1a1a;-webkit-text-stroke:0.04px #1a1a1a;transform:translate(0.00px,0.03px) scaleX(0.8032);">Comment:</span>
<span class="t" style="left:337px;top:385px;font-size:8.8px;line-height:13px;color:#1a1a1a;-webkit-text-stroke:0.04px #1a1a1a;transform:translate(0.80px,0.63px) scaleX(0.8509);">14/06/2018 10:17:08</span>
<span class="t" style="left:417px;top:385px;font-size:8.8px;line-height:13px;color:#1a1a1a;-webkit-text-stroke:0.04px #1a1a1a;transform:translate(0.20px,0.63px) scaleX(0.7986);">Measured:</span>
<span class="t" style="left:458px;top:385px;font-size:8.8px;line-height:13px;color:#1a1a1a;-webkit-text-stroke:0.04px #1a1a1a;transform:translate(0.40px,0.63px) scaleX(0.8571);">14/06/2018 10:21:01</span>
<span class="t" style="left:537px;top:385px;font-size:8.8px;line-height:13px;color:#1a1a1a;-webkit-text-stroke:0.04px #1a1a1a;transform:translate(0.50px,0.63px) scaleX(0.7763);">Backing:</span>
<span class="t" style="left:568px;top:385px;font-size:8.8px;line-height:13px;color:#1a1a1a;-webkit-text-stroke:0.04px #1a1a1a;transform:translate(0.30px,0.63px) scaleX(0.8580);">White</span>
</div></body></html>
